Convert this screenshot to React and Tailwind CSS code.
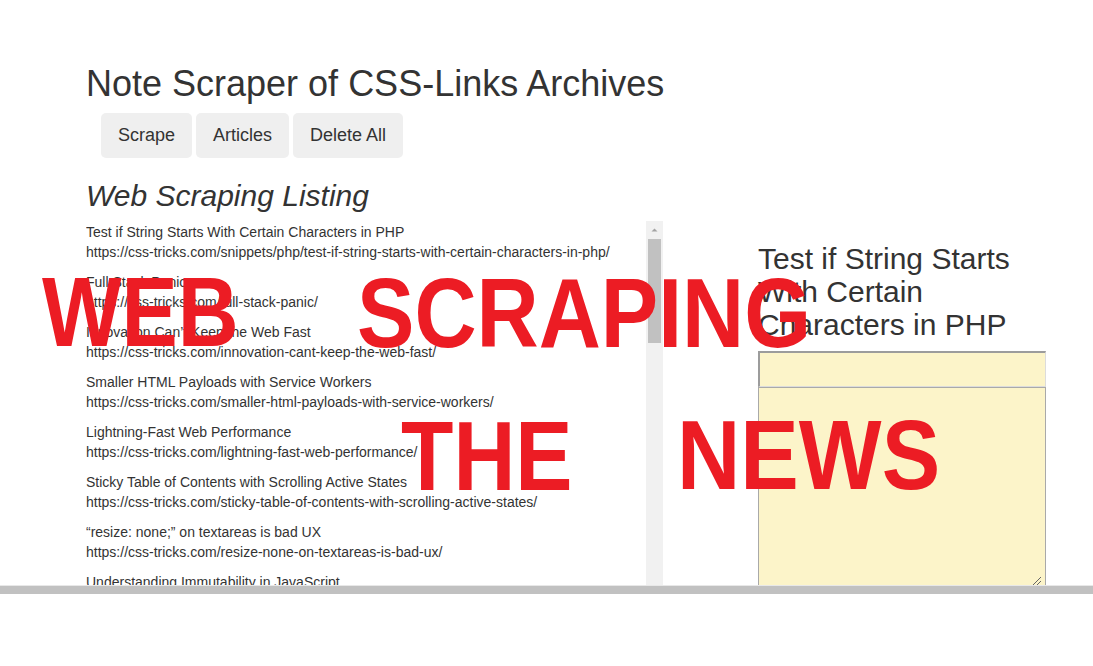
import React from "react";

const items = [
  ["Test if String Starts With Certain Characters in PHP", "https://css-tricks.com/snippets/php/test-if-string-starts-with-certain-characters-in-php/"],
  ["Full Stack Panic", "https://css-tricks.com/full-stack-panic/"],
  ["Innovation Can’t Keep the Web Fast", "https://css-tricks.com/innovation-cant-keep-the-web-fast/"],
  ["Smaller HTML Payloads with Service Workers", "https://css-tricks.com/smaller-html-payloads-with-service-workers/"],
  ["Lightning-Fast Web Performance", "https://css-tricks.com/lightning-fast-web-performance/"],
  ["Sticky Table of Contents with Scrolling Active States", "https://css-tricks.com/sticky-table-of-contents-with-scrolling-active-states/"],
  ["“resize: none;” on textareas is bad UX", "https://css-tricks.com/resize-none-on-textareas-is-bad-ux/"],
  ["Understanding Immutability in JavaScript", "https://css-tricks.com/understanding-immutability-in-javascript/"],
  ["Weekly Platform News", "https://css-tricks.com/weekly-platform-news/"],
];

export default function App() {
  return (
    <div className="relative w-[1093px] h-[666px] overflow-hidden bg-white text-[#333] font-['Liberation_Sans',Arial,sans-serif]">
      <div className="h-[585px] overflow-hidden">
        <div className="pl-[86px] pt-[64px]">
          <h1 className="text-[36px] leading-[40px] font-normal">Note Scraper of CSS-Links Archives</h1>
          <div className="flex gap-[4px] pl-[15px] mt-[9px]">
            {["Scrape", "Articles", "Delete All"].map((b) => (
              <button key={b} className="h-[45px] px-[17px] rounded-[5px] bg-[#efefef] text-[18px] leading-[25px] text-[#333]">
                {b}
              </button>
            ))}
          </div>
          <h2 className="mt-[21px] text-[30px] leading-[33px] italic font-normal">Web Scraping Listing</h2>
          <div className="flex mt-[9px]">
            <div className="flex w-[577px] h-[420px]">
              <div className="flex-1 overflow-hidden pt-px">
                {items.map(([t, u]) => (
                  <div key={u} className="mb-[10px] text-[14px] leading-[20px] whitespace-nowrap">
                    <div>{t}</div>
                    <div>{u}</div>
                  </div>
                ))}
              </div>
              <div className="w-[17px] bg-[#f1f1f1] flex flex-col items-center">
                <svg width="17" height="17" viewBox="0 0 17 17" className="shrink-0">
                  <path d="M5.5 10.5 L8.5 7.5 L11.5 10.5 Z" fill="#a3a3a3" />
                </svg>
                <div className="w-[13px] h-[104px] bg-[#c1c1c1] mt-px" />
              </div>
            </div>
            <div className="ml-[95px] w-[288px] mt-[21px]">
              <h2 className="text-[30px] leading-[33px] font-normal">Test if String Starts With Certain Characters in PHP</h2>
              <div className="mt-[10px] h-[36px] bg-[#fcf4c9] border-t-2 border-l-2 border-b border-r border-t-[#9c9c9c] border-l-[#9c9c9c] border-b-[#dcdcdc] border-r-[#dcdcdc]" />
              <div className="relative h-[220px] bg-[#fcf4c9] border border-[#a9a9a9]">
                <svg width="10" height="10" viewBox="0 0 10 10" className="absolute right-[3px] top-[188px]">
                  <path d="M1 9 L9 1 M5 9 L9 5" stroke="#666" strokeWidth="1" />
                </svg>
              </div>
            </div>
          </div>
        </div>
      </div>
      <div className="h-px bg-[#e8e8e8]" />
      <div className="h-[8px] bg-[#c1c1c1]" />

      <div className="absolute inset-0 pointer-events-none font-['Liberation_Sans',Arial,sans-serif] font-bold text-[98px] leading-none text-[#ec1c24]">
        <span className="absolute left-[42px] top-[263px] origin-left scale-x-[0.86]">WEB</span>
        <span className="absolute left-[357px] top-[264px] origin-left scale-x-[0.878]">SCRAPING</span>
        <span className="absolute left-[401px] top-[407px] origin-left scale-x-[0.875]">THE</span>
        <span className="absolute left-[677px] top-[406px] origin-left scale-x-[0.895]">NEWS</span>
      </div>
    </div>
  );
}
